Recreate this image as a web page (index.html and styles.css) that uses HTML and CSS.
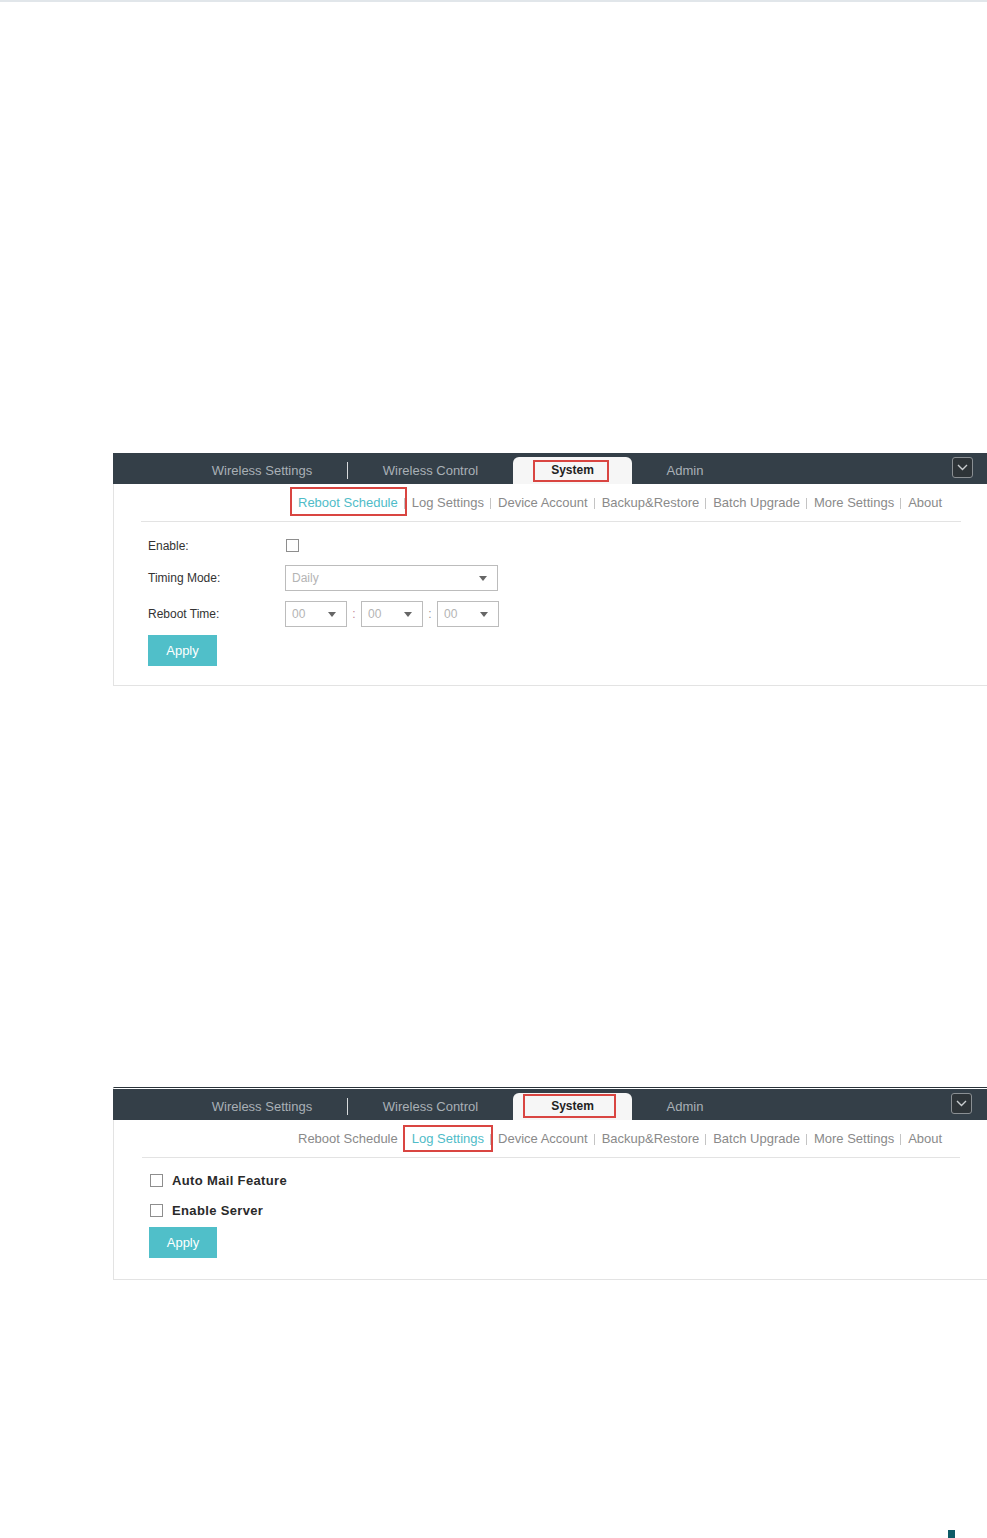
FILE: index.html
```html
<!DOCTYPE html>
<html lang="en">
<head>
<meta charset="utf-8">
<title>System Settings</title>
<link rel="stylesheet" href="styles.css">
</head>
<body>
<div class="topline"></div>

<section class="panel panel-one">
  <div class="bar">
    <div class="tab tab-ws">Wireless Settings</div>
    <div class="tab-sep"></div>
    <div class="tab tab-wc">Wireless Control</div>
    <div class="tab tab-sys active"><span class="mark mark-sys1">System</span></div>
    <div class="tab tab-admin">Admin</div>
    <div class="bar-fill"></div>
    <div class="chev"><svg width="11" height="7" viewBox="0 0 11 7"><path d="M1 1 L5.5 5.5 L10 1" fill="none" stroke="#c8cccf" stroke-width="1.4"/></svg></div>
  </div>
  <nav class="subnav">
    <span class="sub current"><span class="mark mark-sub1">Reboot Schedule</span></span>
    <span class="sub">Log Settings</span>
    <span class="sub">Device Account</span>
    <span class="sub">Backup&amp;Restore</span>
    <span class="sub">Batch Upgrade</span>
    <span class="sub">More Settings</span>
    <span class="sub">About</span>
  </nav>
  <div class="form form-one">
    <div class="row row-enable">
      <label class="lbl">Enable:</label>
      <span class="cbox"></span>
    </div>
    <div class="row row-mode">
      <label class="lbl">Timing Mode:</label>
      <div class="select wide"><span>Daily</span><i class="caret"></i></div>
    </div>
    <div class="row row-time">
      <label class="lbl">Reboot Time:</label>
      <div class="select small"><span>00</span><i class="caret"></i></div>
      <span class="colon c1">:</span>
      <div class="select small"><span>00</span><i class="caret"></i></div>
      <span class="colon">:</span>
      <div class="select small"><span>00</span><i class="caret"></i></div>
    </div>
    <button class="apply">Apply</button>
  </div>
</section>

<section class="panel panel-two">
  <div class="bar">
    <div class="tab tab-ws">Wireless Settings</div>
    <div class="tab-sep"></div>
    <div class="tab tab-wc">Wireless Control</div>
    <div class="tab tab-sys active"><span class="mark mark-sys2">System</span></div>
    <div class="tab tab-admin">Admin</div>
    <div class="bar-fill"></div>
    <div class="chev chev2"><svg width="11" height="7" viewBox="0 0 11 7"><path d="M1 1 L5.5 5.5 L10 1" fill="none" stroke="#c8cccf" stroke-width="1.4"/></svg></div>
  </div>
  <nav class="subnav">
    <span class="sub">Reboot Schedule</span>
    <span class="sub current"><span class="mark mark-sub2">Log Settings</span></span>
    <span class="sub">Device Account</span>
    <span class="sub">Backup&amp;Restore</span>
    <span class="sub">Batch Upgrade</span>
    <span class="sub">More Settings</span>
    <span class="sub">About</span>
  </nav>
  <div class="form form-two">
    <div class="row row-chk">
      <span class="cbox"></span>
      <span class="bold">Auto Mail Feature</span>
    </div>
    <div class="row row-chk">
      <span class="cbox"></span>
      <span class="bold">Enable Server</span>
    </div>
    <button class="apply">Apply</button>
  </div>
</section>

<div class="corner"></div>
</body>
</html>
```

FILE: styles.css
```css
html, body {
  margin: 0;
  padding: 0;
  background: #ffffff;
  overflow-x: hidden;
}
body {
  font-family: "Liberation Sans", Arial, sans-serif;
  font-size: 13px;
  color: #333;
  width: 987px;
}
.topline {
  height: 2px;
  background: #e1e6ea;
}

.panel {
  margin-left: 113px;
  width: 874px;
  border-left: 1px solid #e3e3e3;
  border-bottom: 1px solid #e3e3e3;
  box-sizing: border-box;
}
.panel-one { margin-top: 451px; }
.panel-two {
  margin-top: 401px;
  border-top: 1px solid #2a333a;
  padding-top: 1px;
}

.bar {
  height: 31px;
  background: #343f48;
  display: flex;
  align-items: flex-end;
  margin-left: -1px;
}
.tab {
  height: 27px;
  line-height: 27px;
  text-align: center;
  color: #a9b0b6;
  font-size: 13px;
  box-sizing: border-box;
}
.tab-ws { margin-left: 64px; width: 170px; }
.tab-sep {
  width: 1px;
  height: 17px;
  background: #d7dadc;
  align-self: center;
  margin-top: 3px;
}
.tab-wc { width: 165px; }
.tab-sys {
  width: 119px;
  background: #f6f6f6;
  border-radius: 6px 6px 0 0;
  color: #222;
  font-weight: bold;
  font-size: 12px;
  position: relative;
}
.tab-admin { width: 106px; }
.bar-fill { flex: 1; }
.chev {
  width: 21px;
  height: 21px;
  box-sizing: border-box;
  border: 1px solid #8a8f93;
  border-radius: 3px;
  background: #2e3438;
  align-self: flex-start;
  margin-top: 4px;
  margin-right: 14px;
  display: flex;
  align-items: center;
  justify-content: center;
}
.chev2 { margin-right: 15px; }

.mark { position: relative; }
.mark::after {
  content: "";
  position: absolute;
  border: 2px solid #d94541;
  pointer-events: none;
}
.mark-sys1::after { left: -18px; right: -15px; top: -3px; bottom: -5px; }
.mark-sys2::after { left: -28px; right: -22px; top: -5px; bottom: -5px; }
.mark-sub1::after { left: -8px; right: -9px; top: -8px; bottom: -6px; }
.mark-sub2::after { left: -9px; right: -9px; top: -6px; bottom: -6px; }

.subnav {
  margin-left: 27px;
  width: 820px;
  height: 38px;
  line-height: 37px;
  border-bottom: 1px solid #e3e3e3;
  padding-left: 157px;
  box-sizing: border-box;
  display: flex;
  white-space: nowrap;
}
.panel-two .subnav { margin-left: 28px; width: 818px; padding-left: 156px; }
.sub {
  color: #8a8a8a;
  font-size: 13px;
  padding: 0 7px;
  position: relative;
}
.sub:first-child { padding-left: 0; }
.sub + .sub::before {
  content: "";
  position: absolute;
  left: -1px;
  top: 14px;
  width: 1px;
  height: 11px;
  background: #c4c4c4;
}
.sub.current { color: #4fbcc8; }
.sub.current .mark { z-index: 1; }

.form-one { padding: 11px 0 19px 34px; }
.form-two { padding: 10px 0 21px 35px; }

.row {
  display: flex;
  align-items: center;
  height: 26px;
}
.row-mode { margin-top: 6px; }
.row-time { margin-top: 10px; }
.lbl {
  width: 137px;
  font-size: 12px;
  color: #333;
}
.cbox {
  width: 13px;
  height: 13px;
  box-sizing: border-box;
  border: 1px solid #8e8e8e;
  background: #fff;
  margin-left: 1px;
  display: inline-block;
}
.row-enable .cbox { margin-top: -1px; }
.select {
  height: 26px;
  box-sizing: border-box;
  border: 1px solid #bcbcbc;
  display: flex;
  align-items: center;
  justify-content: space-between;
  padding: 0 10px 0 6px;
  color: #b4b4b4;
  font-size: 12px;
}
.wide { width: 213px; }
.small { width: 62px; }
.caret {
  width: 0;
  height: 0;
  border-left: 4px solid transparent;
  border-right: 4px solid transparent;
  border-top: 5px solid #666;
}
.colon {
  width: 14px;
  text-align: center;
  font-size: 12px;
  color: #999;
}
.colon.c1 { color: #c48a96; }

.apply {
  display: block;
  width: 69px;
  height: 31px;
  border: none;
  background: #50bfc9;
  color: #fff;
  font-family: "Liberation Sans", Arial, sans-serif;
  font-size: 13px;
  padding: 0;
  margin-top: 8px;
  cursor: pointer;
}
.form-two .apply { width: 68px; margin-top: 5px; }

.row-chk { height: 24px; }
.row-chk + .row-chk { margin-top: 6px; }
.row-chk .cbox { margin-left: 1px; margin-right: 9px; }
.bold {
  font-weight: bold;
  font-size: 13px;
  letter-spacing: 0.35px;
  color: #2a2a2a;
}

.corner {
  width: 7px;
  height: 8px;
  background: #0e5a66;
  margin-left: 948px;
  margin-top: 250px;
}
```
